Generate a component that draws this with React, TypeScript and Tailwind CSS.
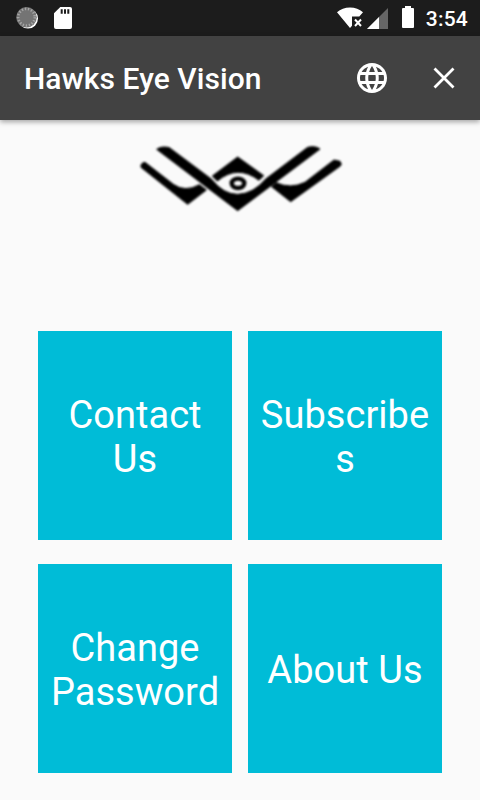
import React from 'react';

const tiles = [
    { id: 'contact', label: 'Contact Us' },
    { id: 'subscribes', label: 'Subscribes' },
    { id: 'password', label: 'Change Password' },
    { id: 'about', label: 'About Us' },
];

function StatusBar() {
    return (
        <div className="flex h-9 items-center bg-[#1c1c1c] text-white">
            <svg className="ml-4 h-6 w-6" viewBox="0 0 24 24" fill="none">
                <circle cx="12" cy="12.6" r="10" fill="#fff" />
                <circle cx="10.5" cy="11.2" r="10.3" fill="#747474" />
                <circle cx="10.5" cy="11.2" r="8.3" stroke="#a6a6a6" strokeWidth="2.6" strokeDasharray="1.3 1.8" />
            </svg>
            <svg className="ml-[14px] h-[22px] w-[18px]" viewBox="0 0 18 22">
                <path d="M6.3 0H16a2 2 0 0 1 2 2v18a2 2 0 0 1-2 2H2a2 2 0 0 1-2-2V6.3z" fill="#fff" />
                <path d="M6.7 2.2h2v4.6h-2zM10 2.2h2v4.6h-2zM13.3 2.2h2v4.6h-2z" fill="#1c1c1c" />
            </svg>
            <div className="ml-auto flex items-center">
                <svg className="h-[22px] w-[26px]" viewBox="0 0 26 22">
                    <path d="M0 5.2C3.4 2.3 8 .5 13 .5s9.6 1.8 13 4.700L22.3 9.500H15v9.200L13 21z" fill="#fff" />
                    <path d="M18 12.500l6 6.500M24 12.500l-6 6.500" stroke="#fff" strokeWidth="2" />
                </svg>
                <svg className="ml-1 h-[22px] w-[21px]" viewBox="0 0 21 22">
                    <path d="M0 22L21 1v21z" fill="#666" />
                    <path d="M0 22L12 10v12z" fill="#fff" />
                </svg>
                <svg className="mb-[2px] ml-[14px] h-[22px] w-3" viewBox="0 0 12 22">
                    <path d="M3 0h6v2h2a1 1 0 0 1 1 1v18a1 1 0 0 1-1 1H1a1 1 0 0 1-1-1V3a1 1 0 0 1 1-1h2z" fill="#fff" />
                </svg>
                <span className="mt-[2px] mr-3 ml-3 text-[21px] leading-9 font-medium tracking-[0.2px]">3:54</span>
            </div>
        </div>
    );
}

function AppBar() {
    return (
        <header className="relative flex h-21 items-center bg-[#424242] pl-6 text-white shadow-[0_2px_5px_rgba(0,0,0,0.35)]">
            <h1 className="pt-[2px] text-[30px] leading-9 font-medium tracking-[0.05px]">Hawks Eye Vision</h1>
            <button type="button" aria-label="Language" className="mr-[43px] ml-auto">
                <svg className="h-9 w-9" viewBox="0 0 24 24" fill="currentColor">
                    <path d="M11.990 2C6.470 2 2 6.480 2 12s4.470 10 9.990 10C17.520 22 22 17.520 22 12S17.520 2 11.990 2zm6.930 6h-2.950c-.32-1.250-.78-2.450-1.380-3.560 1.840.63 3.370 1.910 4.330 3.560zM12 4.040c.83 1.200 1.480 2.530 1.910 3.960h-3.820c.43-1.430 1.080-2.760 1.910-3.960zM4.260 14C4.100 13.360 4 12.690 4 12s.1-1.360.26-2h3.380c-.08.66-.14 1.320-.14 2s.06 1.340.14 2H4.260zm.82 2h2.950c.32 1.250.78 2.450 1.380 3.560-1.840-.63-3.370-1.900-4.330-3.560zm2.950-8H5.080c.96-1.660 2.490-2.930 4.330-3.560C8.810 5.550 8.350 6.750 8.030 8zM12 19.960c-.83-1.200-1.480-2.530-1.910-3.960h3.820c-.43 1.430-1.080 2.760-1.910 3.960zM14.340 14H9.660c-.09-.66-.16-1.320-.16-2s.07-1.350.16-2h4.680c.09.65.16 1.320.16 2s-.07 1.340-.16 2zm.25 5.560c.6-1.110 1.060-2.310 1.380-3.560h2.950c-.96 1.650-2.490 2.930-4.330 3.560zM16.360 14c.08-.66.14-1.320.14-2s-.06-1.340-.14-2h3.380c.16.64.26 1.310.26 2s-.1 1.360-.26 2h-3.380z" />
                </svg>
            </button>
            <button type="button" aria-label="Close" className="mr-[25px]">
                <svg className="h-[22px] w-[22px]" viewBox="0 0 22 22" stroke="currentColor" strokeWidth="2.8">
                    <path d="M1.500 1.500l19 19M20.500 1.500l-19 19" />
                </svg>
            </button>
        </header>
    );
}

function Logo() {
    return (
        <svg className="h-[85px] w-[220px] blur-[0.9px]" viewBox="0 0 660 255" fill="#000" stroke="#000" strokeWidth="3" strokeLinejoin="round">
            <path d="M33 97Q31 84 45 82L130 148Q165 173 208 149L229 165L173 208Z" />
            <path d="M80 43Q95 32 118 38L245 133Q280 178 323 178Q370 176 406 133L533 37Q555 31 570 42L323 227Z" />
            <path d="M323 66L401 122L387 136Q323 87 262 138L247 123Z" />
            <path d="M612 75L630 79Q637 88 631 93L482 200L425 155L438 143Q482 163 525 142Z" />
            <ellipse cx="324" cy="145" rx="19" ry="14" fill="none" strokeWidth="13" />
        </svg>
    );
}

export default function App() {
    return (
        <div className="flex h-screen flex-col overflow-hidden bg-[#fafafa] font-[Roboto,sans-serif]">
            <StatusBar />
            <AppBar />
            <main className="flex flex-col items-center pt-[15px]">
                <Logo />
                <div className="mt-[111px] grid w-[404px] grid-cols-2 gap-x-4 gap-y-6">
                    {tiles.map((tile) => (
                        <button
                            key={tile.id}
                            type="button"
                            className="flex h-[209px] items-center justify-center bg-[#00bcd7] px-3 pt-[3px] text-center text-[38px] leading-[44px] tracking-[0.05px] text-white"
                        >
                            <span className="w-full wrap-anywhere">{tile.label}</span>
                        </button>
                    ))}
                </div>
            </main>
        </div>
    );
}
